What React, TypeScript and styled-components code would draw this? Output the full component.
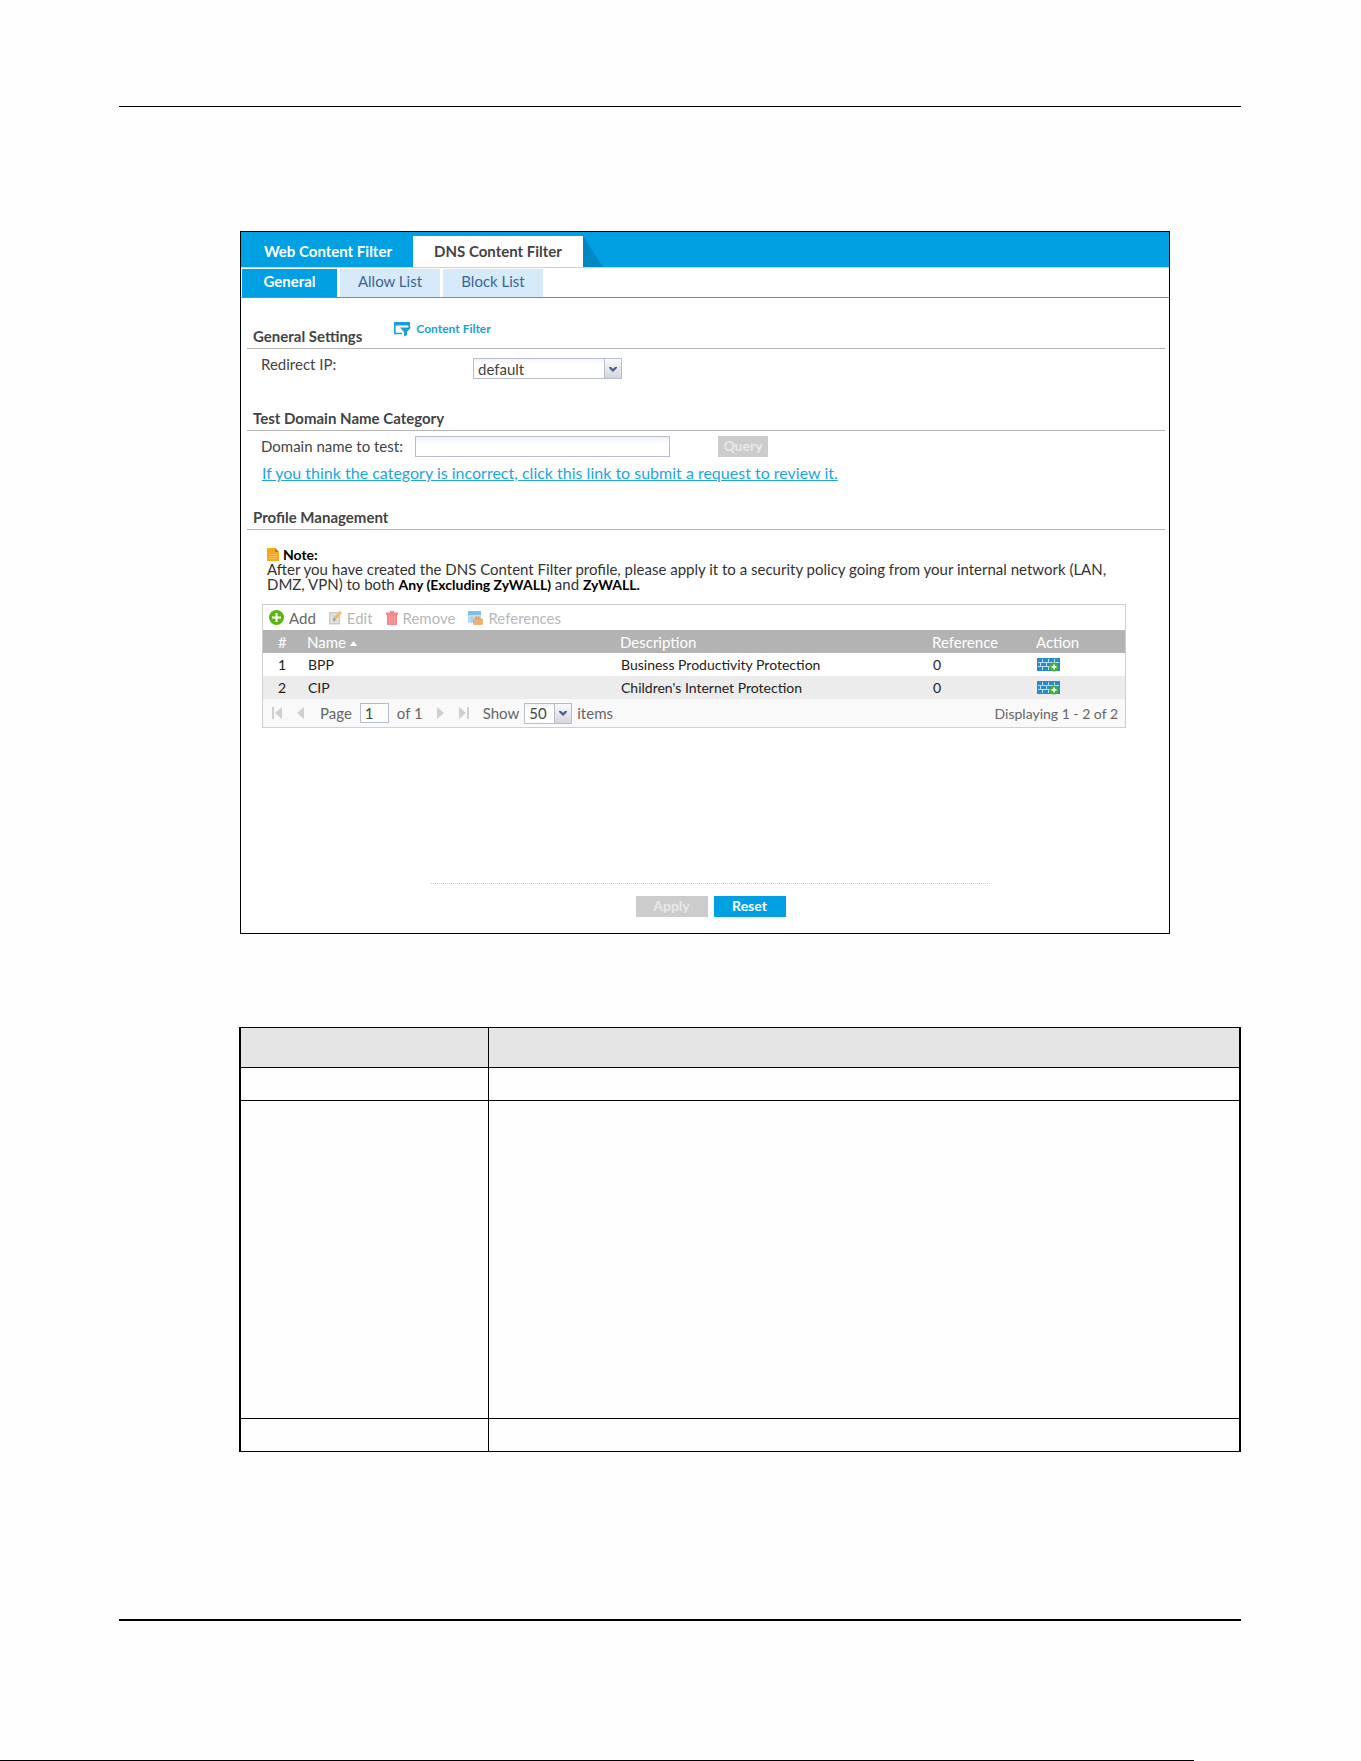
import React, { useState } from 'react';
import styled, { createGlobalStyle } from 'styled-components';

const GlobalStyle = createGlobalStyle`
  * {
    box-sizing: border-box;
  }

  body {
    margin: 0;
    background: #fefefe;
    color: #444444;
    font-family: Lato, 'Liberation Sans', sans-serif;
    font-size: 15px;
  }

  button, input, select {
    font-family: inherit;
    font-size: inherit;
  }
`;

const Page = styled.div`
  display: flex;
  flex-direction: column;
  min-height: 100vh;
`;

const Sheet = styled.main`
  flex: 1;
  margin: 106px 120px 0 119px;
  padding: 124px 0 0 120px;
  border-top: 1px solid #000000;
`;

const Panel = styled.section`
  margin: 0 71px 0 1px;
  padding-bottom: 16px;
  border: 1px solid #000000;
  background: #ffffff;
`;

const MainTabs = styled.nav`
  display: flex;
  align-items: flex-end;
  height: 36px;
  padding-left: 2px;
  background: #00a0e2;
  border-bottom: 1px solid #a5e0f7;
`;

const MainTab = styled.button<{ $active?: boolean }>`
  width: 170px;
  height: 31px;
  padding: 0 0 1px;
  border: 0;
  background: ${(p) => (p.$active ? '#ffffff' : '#00a0e2')};
  color: ${(p) => (p.$active ? '#444444' : '#ffffff')};
  font-weight: 700;
`;

const Wedge = styled.svg`
  width: 20px;
  height: 31px;
`;

const SubTabs = styled.nav`
  display: flex;
  gap: 3px;
  margin-top: 1px;
  padding-left: 1px;
  border-bottom: 1px solid #1eaae5;
`;

const SubTab = styled.button<{ $active?: boolean }>`
  width: ${(p) => (p.$active ? '95px' : '100px')};
  height: 28px;
  padding: 0 0 5px;
  border: 0;
  background: ${(p) => (p.$active ? '#00a0e2' : '#d7eaf9')};
  color: ${(p) => (p.$active ? '#ffffff' : '#3a6596')};
  font-weight: ${(p) => (p.$active ? 700 : 400)};
`;

const SectionHeader = styled.div`
  display: flex;
  align-items: flex-end;
  gap: 32px;
  height: 51px;
  margin: 0 4px 0 6px;
  padding: 0 6px 3px;
  border-bottom: 1px solid #b4b4b4;
`;

const ProfileHeader = styled(SectionHeader)`
  height: 42px;
`;

const SectionTitle = styled.h2`
  margin: 0;
  font-size: 15px;
  line-height: 18px;
  font-weight: 700;
`;

const Shortcut = styled.a`
  display: flex;
  align-items: center;
  gap: 5px;
  margin-bottom: 8px;
  color: #169fdb;
  font-size: 12px;
  line-height: 16px;
  font-weight: 700;
  text-decoration: none;
`;

const FormRow = styled.div`
  display: flex;
  align-items: flex-start;
  padding: 5px 20px 0;
`;

const Label = styled.label<{ $width: number }>`
  width: ${(p) => p.$width}px;
  line-height: 20px;
`;

const TextInput = styled.input`
  width: 255px;
  height: 21px;
  padding: 0 4px;
  border: 1px solid #b9bccd;
  background: linear-gradient(#eef0f2, #ffffff 7px);
`;

const SelectWrap = styled.span<{ $width: number }>`
  position: relative;
  display: block;
  width: ${(p) => p.$width}px;
  height: 21px;
`;

const RedirectSelect = styled(SelectWrap)`
  margin: 4px 0 1px;
`;

const PageSizeSelect = styled(SelectWrap)`
  margin: 0 5px;
`;

const Select = styled.select`
  appearance: none;
  width: 100%;
  height: 100%;
  padding: 0 4px;
  border: 1px solid #b9bccd;
  border-radius: 0;
  background: linear-gradient(#f1f2f4, #ffffff 5px);
  color: #444444;
`;

const SelectArrow = styled.span`
  position: absolute;
  top: 0;
  right: 0;
  display: flex;
  align-items: center;
  justify-content: center;
  width: 18px;
  height: 21px;
  border: 1px solid #b9bccd;
  background: linear-gradient(#fafafc, #d3d6dd);
  pointer-events: none;
`;

const ActionButton = styled.button<{ $width: number }>`
  width: ${(p) => p.$width}px;
  height: 21px;
  padding: 0 0 2px;
  border: 0;
  background: #00a0e2;
  color: #ffffff;
  font-size: 14px;
  font-weight: 700;

  &:disabled {
    background: #cccccc;
    color: #e8e8e8;
  }
`;

const QueryButton = styled(ActionButton)`
  margin-left: 48px;
`;

const ReviewLink = styled.a`
  display: block;
  width: fit-content;
  margin: 6px 0 5px 21px;
  color: #1ea5df;
  font-size: 16px;
  line-height: 20px;
`;

const Note = styled.div`
  margin: 17px 60px 12px 26px;
  line-height: 15px;
  color: #333333;

  b {
    color: #000000;
    font-size: 14px;
  }
`;

const NoteTitle = styled.div`
  display: flex;
  align-items: center;
  gap: 4px;
`;

const Grid = styled.div`
  margin: 0 43px 0 21px;
  border: 1px solid #d0d0d0;
`;

const Toolbar = styled.div`
  display: flex;
  align-items: center;
  gap: 13px;
  height: 25px;
  padding: 0 6px;
`;

const ToolButton = styled.button`
  display: flex;
  align-items: center;
  gap: 5px;
  padding: 0;
  border: 0;
  background: none;
  color: #666666;
  line-height: 20px;

  &:disabled {
    color: #b8b8b8;
  }
`;

const ProfileTable = styled.table`
  width: 100%;
  border-collapse: collapse;
  table-layout: fixed;
`;

const HeadCell = styled.th<{ $width?: number }>`
  width: ${(p) => (p.$width ? `${p.$width}px` : 'auto')};
  height: 23px;
  padding: 0 0 0 6px;
  background: #b3b3b3;
  color: #ffffff;
  font-weight: 400;
  text-align: left;

  &:first-child {
    padding-left: 15px;
  }

  svg {
    vertical-align: 2px;
  }
`;

const Row = styled.tr`
  &:nth-child(even) {
    background: #ececec;
  }
`;

const Cell = styled.td`
  height: 23px;
  padding: 0 0 0 7px;
  color: #222222;
  font-size: 14px;

  &:first-child {
    padding-left: 15px;
  }

  svg {
    display: block;
  }
`;

const Pager = styled.div`
  display: flex;
  align-items: center;
  height: 28px;
  padding: 0 7px 0 3px;
  background: #f9f9f9;
  color: #666666;
`;

const PagerButton = styled.button`
  display: flex;
  justify-content: center;
  width: 23px;
  padding: 0;
  border: 0;
  background: none;
`;

const PageLabel = styled.label`
  margin-left: 8px;
`;

const PageInput = styled.input`
  width: 29px;
  height: 20px;
  margin: 0 8px;
  padding: 0 4px;
  border: 1px solid #b5bccb;
  color: #444444;
`;

const PageCount = styled.span`
  margin-right: 6px;
`;

const PagerStatus = styled.span`
  margin-left: auto;
  font-size: 14px;
`;

const Footer = styled.footer`
  display: flex;
  justify-content: center;
  gap: 6px;
  margin: 155px 179px 0 190px;
  padding-top: 12px;
  border-top: 1px dotted #cccccc;
`;

const DocTable = styled.table`
  width: 100%;
  margin-top: 93px;
  border-collapse: collapse;
  table-layout: fixed;
  border: 1px solid #000000;
  border-width: 1px 2px;

  th, td {
    padding: 0;
    border: 1px solid #000000;
  }

  th {
    background: #e5e5e5;
  }

  th:first-child, td:first-child {
    width: 248px;
    border-left-width: 2px;
  }

  th:last-child, td:last-child {
    border-right-width: 2px;
  }
`;

const DocRow = styled.tr<{ $height: number }>`
  height: ${(p) => p.$height}px;
`;

const BottomRule = styled.div`
  height: 2px;
  margin: 0 120px 139px 119px;
  background: #000000;
`;

const PageEdge = styled.div`
  width: 1194px;
  max-width: 100%;
  height: 1px;
  background: #000000;
`;

const ArrowIcon = () => (
  <svg width="8" height="6" viewBox="0 0 8 6">
    <path d="M0 1h2l2 2 2-2h2v1L4 6 0 2z" fill="#43598e" />
  </svg>
);

const ShortcutIcon = () => (
  <svg width="17" height="16" viewBox="0 0 17 16">
    <path d="M0 1h16v3.500H0z" fill="#169fdb" />
    <path d="M.8 3v9.500H8M15.200 3v4" fill="none" stroke="#169fdb" strokeWidth="1.600" />
    <path d="M6 6.500h11l-4 4.500v3l-3 1.500V11z" fill="#169fdb" />
  </svg>
);

const NoteIcon = () => (
  <svg width="12" height="13" viewBox="0 0 12 13">
    <path d="M0 0h8l4 4v9H0z" fill="#f9a61a" />
    <path d="M8 0v4h4z" fill="#c57a10" />
    <path d="M2 6.5h8M2 8.5h8M2 10.5h8" stroke="#fbbf58" />
  </svg>
);

const AddIcon = () => (
  <svg width="15" height="15" viewBox="0 0 15 15">
    <circle cx="7.5" cy="7.5" r="7.5" fill="#58b512" />
    <path d="M7.5 3v9M3 7.5h9" stroke="#ffffff" strokeWidth="2" />
  </svg>
);

const EditIcon = () => (
  <svg width="13" height="14" viewBox="0 0 13 14">
    <path d="M.8 1.8h9.4v11H.8z" fill="#e9e9e9" stroke="#c9c9c9" strokeWidth="1.5" />
    <path d="M3 5h4M3 7.5h3M3 10h5" stroke="#bbbbbb" />
    <path d="M4 10l1-3.5L11 0l2 2-6 6.5z" fill="#f2b76c" />
    <path d="M4 10l1-3 1.7 1.7z" fill="#8c8c8c" />
  </svg>
);

const RemoveIcon = () => (
  <svg width="12" height="14" viewBox="0 0 12 14">
    <path d="M0 1.5h4V0h4v1.5h4V4H0z" fill="#f28a8c" />
    <path d="M1 4h10v10H1z" fill="#f28a8c" />
    <path d="M3.5 5v7.5M6 5v7.5M8.5 5v7.5" stroke="#f6a6a7" />
  </svg>
);

const ReferencesIcon = () => (
  <svg width="15" height="14" viewBox="0 0 15 14">
    <path d="M0 0h13v12H0z" fill="#c6e4f9" />
    <path d="M0 0h13v4H0z" fill="#7bc0f0" />
    <path d="M0 7h6M0 10h6M4 4v8" stroke="#94cbf2" />
    <path d="M5 8l1.500-.8V5.500h6V7L15 8v5l-1 1H6l-1-1z" fill="#e9b377" />
    <path d="M8.5 5.5v3M10.5 5.5v3" stroke="#cf9553" strokeWidth=".7" />
  </svg>
);

const PolicyIcon = () => (
  <svg width="23" height="15" viewBox="0 0 23 15">
    <path d="M0 1h23v13H0z" fill="#2b8bc7" />
    <path
      d="M1 5.500h21M1 9.500h12M5.500 2v3.500M11.500 2v3.500M17.500 2v3.500M3.500 5.500v4M9.500 5.500v4M5.500 9.500V13M11.500 9.500V13"
      stroke="#b9dcf2"
    />
    <circle cx="17" cy="10" r="4.500" fill="#45b035" />
    <path d="M17 7.500v5M14.500 10h5" stroke="#ffffff" strokeWidth="1.500" />
  </svg>
);

const pagerShapes = {
  first: 'M0 0h2v12H0zM10 0v12L3 6z',
  previous: 'M9 0v12L2 6z',
  next: 'M2 0v12l7-6z',
  last: 'M9 0h2v12H9zM1 0v12l7-6z',
};

const PagerArrow: React.FC<{ kind: keyof typeof pagerShapes }> = ({ kind }) => (
  <PagerButton type="button" aria-label={`${kind} page`} disabled>
    <svg width="11" height="12" viewBox="0 0 11 12">
      <path d={pagerShapes[kind]} fill="#cfcfcf" />
    </svg>
  </PagerButton>
);

const profiles = [
  { name: 'BPP', description: 'Business Productivity Protection', reference: 0 },
  { name: 'CIP', description: "Children's Internet Protection", reference: 0 },
];

const docRowHeights = [33, 318, 33];

const App: React.FC = () => {
  const [redirect, setRedirect] = useState('default');
  const [domain, setDomain] = useState('');
  const [page, setPage] = useState('1');
  const [pageSize, setPageSize] = useState('50');

  return (
    <Page>
      <GlobalStyle />
      <Sheet>
        <Panel>
          <MainTabs>
            <MainTab type="button">Web Content Filter</MainTab>
            <MainTab type="button" $active>DNS Content Filter</MainTab>
            <Wedge viewBox="0 0 20 31">
              <path d="M0 0l20 31H0z" fill="#0088c2" />
            </Wedge>
          </MainTabs>
          <SubTabs>
            <SubTab type="button" $active>General</SubTab>
            <SubTab type="button">Allow List</SubTab>
            <SubTab type="button">Block List</SubTab>
          </SubTabs>

          <SectionHeader>
            <SectionTitle>General Settings</SectionTitle>
            <Shortcut href="#content-filter">
              <ShortcutIcon />
              Content Filter
            </Shortcut>
          </SectionHeader>
          <FormRow>
            <Label htmlFor="redirect" $width={212}>Redirect IP:</Label>
            <RedirectSelect $width={149}>
              <Select id="redirect" value={redirect} onChange={(e) => setRedirect(e.target.value)}>
                <option>default</option>
              </Select>
              <SelectArrow><ArrowIcon /></SelectArrow>
            </RedirectSelect>
          </FormRow>

          <SectionHeader>
            <SectionTitle>Test Domain Name Category</SectionTitle>
          </SectionHeader>
          <FormRow>
            <Label htmlFor="domain" $width={154}>Domain name to test:</Label>
            <TextInput id="domain" value={domain} onChange={(e) => setDomain(e.target.value)} />
            <QueryButton type="button" $width={50} disabled={!domain}>Query</QueryButton>
          </FormRow>
          <ReviewLink href="#review">
            If you think the category is incorrect, click this link to submit a request to review it.
          </ReviewLink>

          <ProfileHeader>
            <SectionTitle>Profile Management</SectionTitle>
          </ProfileHeader>
          <Note>
            <NoteTitle><NoteIcon /><b>Note:</b></NoteTitle>
            After you have created the DNS Content Filter profile, please apply it to a security policy going
            from your internal network (LAN, DMZ, VPN) to both <b>Any (Excluding ZyWALL)</b> and <b>ZyWALL.</b>
          </Note>

          <Grid>
            <Toolbar>
              <ToolButton type="button"><AddIcon />Add</ToolButton>
              <ToolButton type="button" disabled><EditIcon />Edit</ToolButton>
              <ToolButton type="button" disabled><RemoveIcon />Remove</ToolButton>
              <ToolButton type="button" disabled><ReferencesIcon />References</ToolButton>
            </Toolbar>
            <ProfileTable>
              <thead>
                <tr>
                  <HeadCell $width={38}>#</HeadCell>
                  <HeadCell>
                    Name{' '}
                    <svg width="7" height="5" viewBox="0 0 7 5">
                      <path d="M3.5 0L7 5H0z" fill="#ffffff" />
                    </svg>
                  </HeadCell>
                  <HeadCell $width={312}>Description</HeadCell>
                  <HeadCell $width={104}>Reference</HeadCell>
                  <HeadCell $width={95}>Action</HeadCell>
                </tr>
              </thead>
              <tbody>
                {profiles.map((profile, index) => (
                  <Row key={profile.name}>
                    <Cell>{index + 1}</Cell>
                    <Cell>{profile.name}</Cell>
                    <Cell>{profile.description}</Cell>
                    <Cell>{profile.reference}</Cell>
                    <Cell><PolicyIcon /></Cell>
                  </Row>
                ))}
              </tbody>
            </ProfileTable>
            <Pager>
              <PagerArrow kind="first" />
              <PagerArrow kind="previous" />
              <PageLabel htmlFor="page">Page</PageLabel>
              <PageInput id="page" value={page} onChange={(e) => setPage(e.target.value)} />
              <PageCount>of 1</PageCount>
              <PagerArrow kind="next" />
              <PagerArrow kind="last" />
              <PageLabel htmlFor="page-size">Show</PageLabel>
              <PageSizeSelect $width={48}>
                <Select id="page-size" value={pageSize} onChange={(e) => setPageSize(e.target.value)}>
                  <option>50</option>
                </Select>
                <SelectArrow><ArrowIcon /></SelectArrow>
              </PageSizeSelect>
              <span>items</span>
              <PagerStatus>Displaying 1 - 2 of 2</PagerStatus>
            </Pager>
          </Grid>

          <Footer>
            <ActionButton type="button" $width={72} disabled>Apply</ActionButton>
            <ActionButton type="button" $width={72}>Reset</ActionButton>
          </Footer>
        </Panel>

        <DocTable>
          <thead>
            <DocRow $height={40}><th /><th /></DocRow>
          </thead>
          <tbody>
            {docRowHeights.map((height, index) => (
              <DocRow key={index} $height={height}><td /><td /></DocRow>
            ))}
          </tbody>
        </DocTable>
      </Sheet>
      <BottomRule />
      <PageEdge />
    </Page>
  );
};

export default App;
